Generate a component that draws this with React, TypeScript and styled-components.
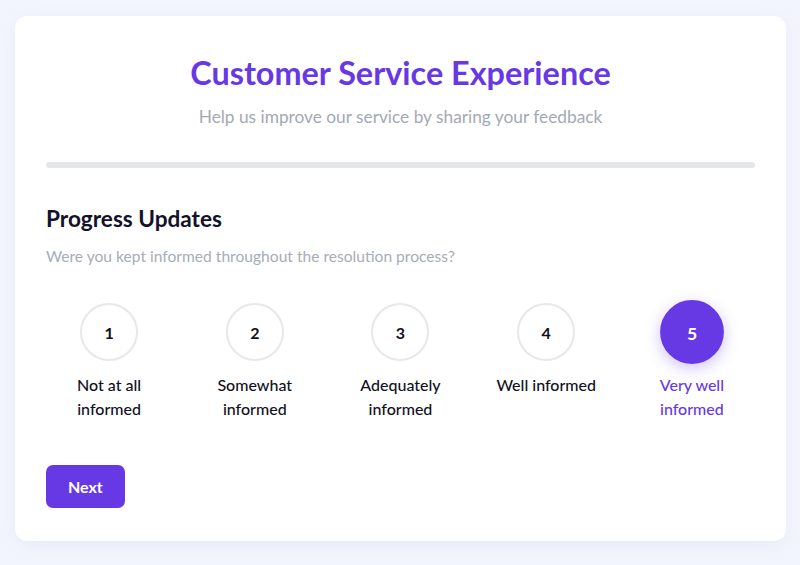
import React, { useState } from 'react';
import styled, { createGlobalStyle } from 'styled-components';

const GlobalStyle = createGlobalStyle`
  body {
    margin: 0;
    background: #f3f5fe;
    font-family: 'Lato', 'Open Sans', sans-serif;
  }
`;

const options = [
  { value: 1, label: 'Not at all informed' },
  { value: 2, label: 'Somewhat informed' },
  { value: 3, label: 'Adequately informed' },
  { value: 4, label: 'Well informed' },
  { value: 5, label: 'Very well informed' },
];

const App = () => {
  const [selected, setSelected] = useState(5);

  return (
    <Page>
      <GlobalStyle />
      <Card>
        <Header>
          <Title>Customer Service Experience</Title>
          <Subtitle>Help us improve our service by sharing your feedback</Subtitle>
        </Header>
        <ProgressTrack />
        <SectionTitle>Progress Updates</SectionTitle>
        <Question>Were you kept informed throughout the resolution process?</Question>
        <OptionsRow>
          {options.map((o) => (
            <Option key={o.value} onClick={() => setSelected(o.value)}>
              <Circle $active={selected === o.value}>{o.value}</Circle>
              <OptionLabel $active={selected === o.value}>{o.label}</OptionLabel>
            </Option>
          ))}
        </OptionsRow>
        <NextButton>Next</NextButton>
      </Card>
    </Page>
  );
};

export default App;

const Page = styled.div`
  padding: 16px 14px 25px 15px;
`;

const Card = styled.div`
  background: #ffffff;
  border-radius: 12px;
  box-shadow: 0 4px 20px rgba(99, 102, 180, 0.08);
  padding: 38px 31px 33px;
  display: flex;
  flex-direction: column;
`;

const Header = styled.div`
  text-align: center;
`;

const Title = styled.h1`
  margin: 0;
  color: #6739e4;
  font-size: 32.4px;
  line-height: 38px;
  font-weight: 700;
`;

const Subtitle = styled.p`
  margin: 13px 0 0;
  color: #a3a9b4;
  font-size: 17.3px;
  line-height: 24px;
`;

const ProgressTrack = styled.div`
  margin-top: 33px;
  height: 6px;
  border-radius: 3px;
  background: #e6e7eb;
`;

const SectionTitle = styled.h2`
  margin: 37px 0 0;
  color: #12122a;
  font-size: 22.6px;
  line-height: 28px;
  font-weight: 700;
`;

const Question = styled.p`
  margin: 11px 0 0;
  color: #a7adb7;
  font-size: 15.6px;
  line-height: 24px;
`;

const OptionsRow = styled.div`
  margin-top: 35px;
  display: grid;
  grid-template-columns: repeat(5, 1fr);
  column-gap: 19.5px;
`;

const Option = styled.div`
  display: flex;
  flex-direction: column;
  align-items: center;
  cursor: pointer;
`;

const Circle = styled.div<{ $active: boolean }>`
  width: 58px;
  height: 58px;
  box-sizing: border-box;
  border-radius: 50%;
  display: flex;
  align-items: center;
  justify-content: center;
  font-size: 16px;
  font-weight: 700;
  color: ${(p) => (p.$active ? '#ffffff' : '#111122')};
  background: ${(p) => (p.$active ? '#6739e4' : '#ffffff')};
  border: 2px solid ${(p) => (p.$active ? '#6739e4' : '#e8e8ec')};
  transform: ${(p) => (p.$active ? 'scale(1.1)' : 'none')};
  box-shadow: ${(p) => (p.$active ? '0 4px 14px rgba(103, 57, 228, 0.3)' : 'none')};
`;

const OptionLabel = styled.span<{ $active: boolean }>`
  margin-top: 12px;
  text-align: center;
  font-size: 16px;
  line-height: 24px;
  font-weight: 500;
  max-width: 100px;
  color: ${(p) => (p.$active ? '#6739e4' : '#111122')};
`;

const NextButton = styled.button`
  align-self: flex-start;
  margin-top: 44px;
  height: 43px;
  padding: 0 22px;
  border: none;
  border-radius: 7px;
  background: #6739e4;
  color: #ffffff;
  font-family: inherit;
  font-size: 16px;
  font-weight: 700;
  cursor: pointer;
`;
